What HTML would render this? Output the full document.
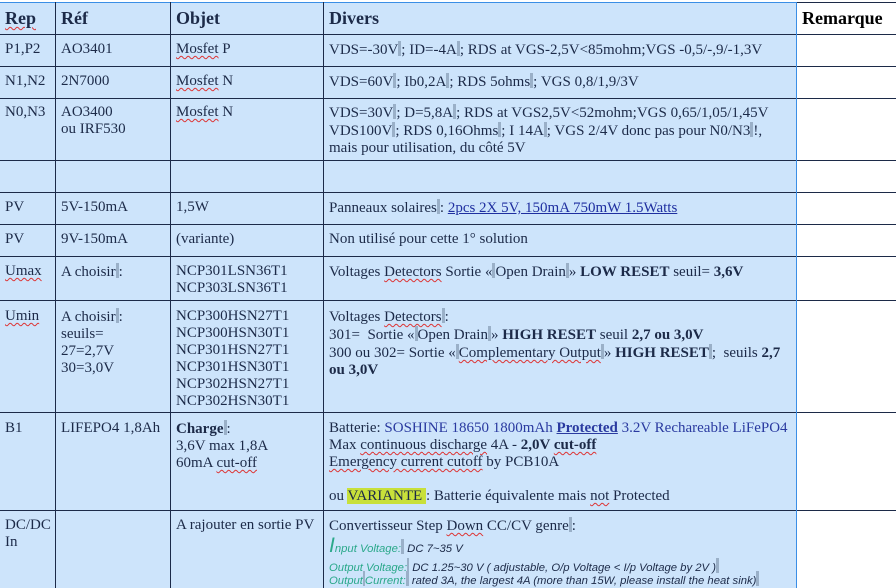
<!DOCTYPE html>
<html><head><meta charset="utf-8"><style>
body{margin:0;width:896px;height:588px;overflow:hidden;background:#fff;font-family:"Liberation Serif",serif;font-size:15px;color:#1c2a48;position:relative}
.bg{position:absolute;left:0;top:2px;width:796px;height:586px;background:#cde4fb}
.h{position:absolute;height:1px;background:#1c2a48}
.v{position:absolute;width:1px;background:#1c2a48}
.t{position:absolute;line-height:17px;white-space:nowrap}
.hd{font-weight:bold;font-size:18px}
.sq{text-decoration:underline wavy #d33;text-decoration-thickness:1px;text-underline-offset:2px}
.c{display:inline-block;width:3px;height:15px;background:#9ab0c8;vertical-align:-2px}
.g{font-family:"Liberation Sans",sans-serif;font-style:italic;font-size:11.3px;color:#2aa88a;line-height:13px}
.gd{color:#1c2a48}
a{color:#1f2fa0}
</style></head><body>
<div class="bg"></div>
<div class="h" style="left:0;top:2px;width:796px;background:#3a8ee6"></div>
<div class="h" style="left:796px;top:2px;width:100px"></div>
<div class="h" style="left:0;top:34px;width:896px"></div>
<div class="h" style="left:0;top:66px;width:896px"></div>
<div class="h" style="left:0;top:98px;width:896px"></div>
<div class="h" style="left:0;top:160px;width:896px"></div>
<div class="h" style="left:0;top:192px;width:896px"></div>
<div class="h" style="left:0;top:224px;width:896px"></div>
<div class="h" style="left:0;top:256px;width:896px"></div>
<div class="h" style="left:0;top:300px;width:896px"></div>
<div class="h" style="left:0;top:412px;width:896px"></div>
<div class="h" style="left:0;top:510px;width:896px"></div>
<div class="v" style="left:55px;top:2px;height:586px"></div>
<div class="v" style="left:170px;top:2px;height:586px"></div>
<div class="v" style="left:323px;top:2px;height:586px"></div>
<div class="v" style="left:796px;top:2px;height:586px;background:#3a8ee6"></div>

<div class="t hd" style="left:5px;top:10px"><span class="sq">Rep</span></div>
<div class="t hd" style="left:61px;top:10px">Réf</div>
<div class="t hd" style="left:176px;top:10px">Objet</div>
<div class="t hd" style="left:329px;top:10px">Divers</div>
<div class="t hd" style="left:802px;top:10px;color:#000">Remarque</div>

<div class="t" style="left:5px;top:41px">P1,P2</div>
<div class="t" style="left:61px;top:41px">AO3401</div>
<div class="t" style="left:176px;top:41px"><span class="sq">Mosfet</span> P</div>
<div class="t" style="left:329px;top:41px">VDS=-30V<span class="c"></span>; ID=-4A<span class="c"></span>; RDS at VGS-2,5V&lt;85mohm;VGS -0,5/-,9/-1,3V</div>

<div class="t" style="left:5px;top:73px">N1,N2</div>
<div class="t" style="left:61px;top:73px">2N7000</div>
<div class="t" style="left:176px;top:73px"><span class="sq">Mosfet</span> N</div>
<div class="t" style="left:329px;top:73px">VDS=60V<span class="c"></span>; Ib0,2A<span class="c"></span>; RDS 5ohms<span class="c"></span>; VGS 0,8/1,9/3V</div>

<div class="t" style="left:5px;top:104px">N0,N3</div>
<div class="t" style="left:61px;top:104px">AO3400<br>ou IRF530</div>
<div class="t" style="left:176px;top:104px"><span class="sq">Mosfet</span> N</div>
<div class="t" style="left:329px;top:104px">VDS=30V<span class="c"></span>; D=5,8A<span class="c"></span>; RDS at VGS2,5V&lt;52mohm;VGS 0,65/1,05/1,45V<br>VDS100V<span class="c"></span>; RDS 0,16Ohms<span class="c"></span>; I 14A<span class="c"></span>; VGS 2/4V donc pas pour N0/N3<span class="c"></span>!,<br>mais pour utilisation, du côté 5V</div>

<div class="t" style="left:5px;top:199px">PV</div>
<div class="t" style="left:61px;top:199px">5V-150mA</div>
<div class="t" style="left:176px;top:199px">1,5W</div>
<div class="t" style="left:329px;top:199px">Panneaux solaires<span class="c"></span>: <a><u>2pcs 2X 5V, 150mA 750mW 1.5Watts</u></a></div>

<div class="t" style="left:5px;top:231px">PV</div>
<div class="t" style="left:61px;top:231px">9V-150mA</div>
<div class="t" style="left:176px;top:231px">(variante)</div>
<div class="t" style="left:329px;top:231px">Non utilisé pour cette 1° solution</div>

<div class="t" style="left:5px;top:263px"><span class="sq">Umax</span></div>
<div class="t" style="left:61px;top:263px">A choisir<span class="c"></span>:</div>
<div class="t" style="left:176px;top:263px">NCP301LSN36T1<br>NCP303LSN36T1</div>
<div class="t" style="left:329px;top:263px">Voltages <span class="sq">Detectors</span> Sortie «<span class="c"></span>Open Drain<span class="c"></span>» <b>LOW RESET</b> seuil= <b>3,6V</b></div>

<div class="t" style="left:5px;top:308px"><span class="sq">Umin</span></div>
<div class="t" style="left:61px;top:308px">A choisir<span class="c"></span>:<br>seuils=<br>27=2,7V<br>30=3,0V</div>
<div class="t" style="left:176px;top:308px">NCP300HSN27T1<br>NCP300HSN30T1<br>NCP301HSN27T1<br>NCP301HSN30T1<br>NCP302HSN27T1<br>NCP302HSN30T1</div>
<div class="t" style="left:329px;top:308px">Voltages <span class="sq">Detectors</span><span class="c"></span>:<br>301= &nbsp;Sortie «<span class="c"></span>Open Drain<span class="c"></span>» <b>HIGH RESET</b> seuil <b>2,7 ou 3,0V</b><br>300 ou 302= Sortie «<span class="c"></span><span class="sq">Complementary Output</span><span class="c"></span>» <b>HIGH RESET</b><span class="c"></span>; &nbsp;seuils <b>2,7</b><br><b>ou 3,0V</b></div>

<div class="t" style="left:5px;top:420px">B1</div>
<div class="t" style="left:61px;top:420px">LIFEPO4 1,8Ah</div>
<div class="t" style="left:176px;top:420px"><b>Charge</b><span class="c"></span>:<br>3,6V max 1,8A<br>60mA <span class="sq">cut-off</span></div>
<div class="t" style="left:329px;top:420px">Batterie: <span style="color:#2a3aa0">SOSHINE 18650 1800mAh <b><u>Protected</u></b> 3.2V Rechareable LiFePO4</span><br>Max <span class="sq">continuous discharge</span> 4A - <b>2,0V <span class="sq">cut-off</span></b><br><span class="sq">Emergency current cutoff</span> by PCB10A<br><br>ou <span style="background:#c8e03a">VARIANTE </span>: Batterie équivalente mais <span class="sq">not</span> Protected</div>

<div class="t" style="left:5px;top:517px">DC/DC<br>In</div>
<div class="t" style="left:176px;top:517px">A rajouter en sortie PV</div>
<div class="t" style="left:329px;top:517px">Convertisseur Step <span class="sq">Down</span> CC/CV genre<span class="c"></span>:</div>
<div class="t g" style="left:329px;top:539px"><span style="font-size:21px">I</span>nput Voltage:<span class="c"></span> <span class="gd">DC 7~35 V</span></div>
<div class="t g" style="left:329px;top:558px">Output Voltage:<span class="c" style="width:2px"></span> <span class="gd">DC 1.25~30 V ( adjustable, O/p Voltage &lt; I/p Voltage by 2V )</span><span class="c"></span></div>
<div class="t g" style="left:329px;top:571px">Output<span class="c" style="width:2px"></span>Current:<span class="c"></span> <span class="gd">rated 3A, the largest 4A (more than 15W, please install the heat sink)</span><span class="c"></span></div>
</body></html>
